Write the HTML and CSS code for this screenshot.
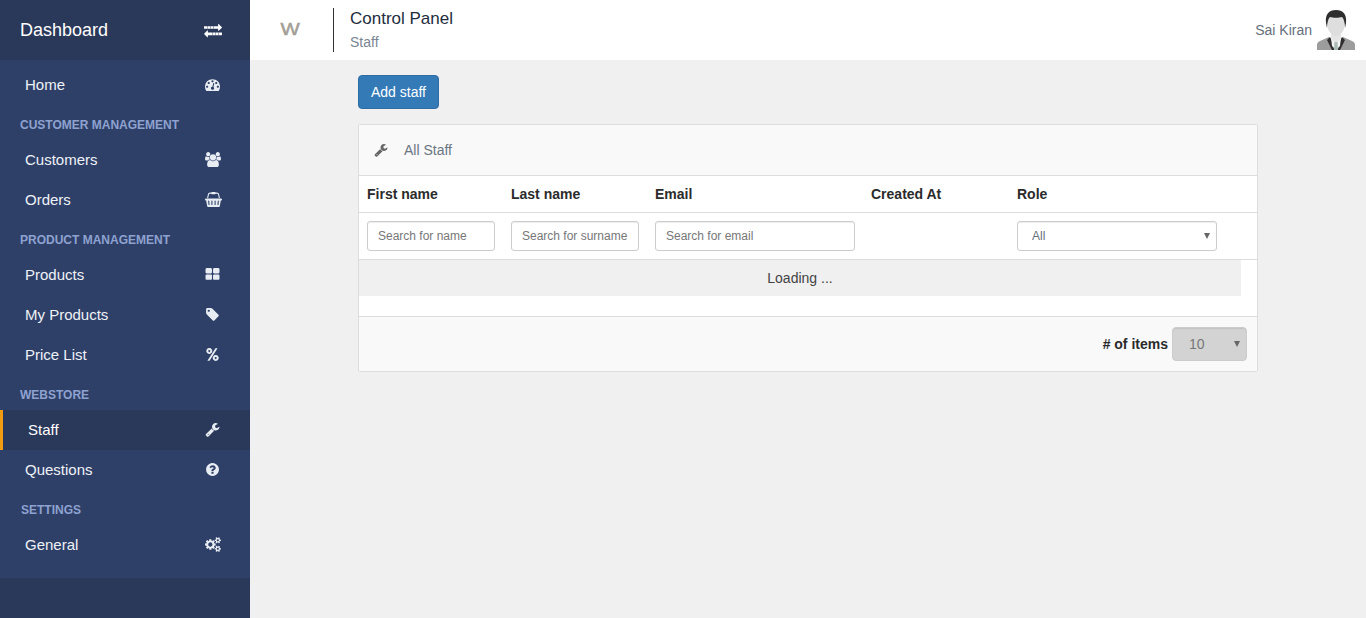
FILE: index.html
```html
<!DOCTYPE html>
<html lang="en">
<head>
    <meta charset="UTF-8">
    <meta name="viewport" content="width=device-width, initial-scale=1.0">
    <title>Control Panel - Staff</title>
    <link rel="stylesheet" href="styles.css">
</head>
<body>
    <div class="sidebar">
        <div class="brand">
            <span>Dashboard</span>
            <svg class="brand-icon" viewBox="0 0 1792 1792">
                <path d="M1792 1184v192q0 13-9.5 22.5t-22.5 9.5h-1376v192q0 13-9.5 22.5t-22.5 9.5q-12 0-24-10l-319-320q-9-9-9-22 0-14 9-23l320-320q9-9 23-9 13 0 22.5 9.5t9.5 22.5v192h1376q13 0 22.5 9.5t9.5 22.5zm0-544q0 14-9 23l-320 320q-9 9-23 9-13 0-22.5-9.5t-9.5-22.5v-192h-1376q-13 0-22.5-9.5t-9.5-22.5v-192q0-13 9.5-22.5t22.5-9.5h1376v-192q0-14 9-23t23-9q12 0 24 10l319 319q9 9 9 23z"/>
                <path class="brand-cut" d="M300 380h70v400h-70zM620 380h70v400h-70zM900 380h70v400h-70zM830 1040h70v400h-70zM1120 1040h70v400h-70zM1420 1040h70v400h-70z"/>
            </svg>
        </div>
        <nav class="menu">
            <a class="item">Home
                <svg class="icon" viewBox="0 0 1792 1792"><path d="M384 1152q0-53-37.5-90.5t-90.5-37.5-90.5 37.5-37.5 90.5 37.5 90.5 90.5 37.5 90.5-37.5 37.5-90.5zm192-448q0-53-37.5-90.5t-90.5-37.5-90.5 37.5-37.5 90.5 37.5 90.5 90.5 37.5 90.5-37.5 37.5-90.5zm428 481l101-382q6-26-7.5-48.5t-38.5-29.5-48 6.5-30 39.5l-101 382q-60 5-107 43.5t-63 98.5q-20 77 20 146t117 89 146-20 89-117q16-60-6-117t-72-91zm660-33q0-53-37.5-90.5t-90.5-37.5-90.5 37.5-37.5 90.5 37.5 90.5 90.5 37.5 90.5-37.5 37.5-90.5zm-640-640q0-53-37.5-90.5t-90.5-37.5-90.5 37.5-37.5 90.5 37.5 90.5 90.5 37.5 90.5-37.5 37.5-90.5zm448 192q0-53-37.5-90.5t-90.5-37.5-90.5 37.5-37.5 90.5 37.5 90.5 90.5 37.5 90.5-37.5 37.5-90.5zm320 448q0 261-141 483-19 29-54 29h-1402q-35 0-54-29-141-221-141-483 0-182 71-348t191-286 286-191 348-71 348 71 286 191 191 286 71 348z"/></svg>
            </a>
            <div class="section">CUSTOMER MANAGEMENT</div>
            <a class="item">Customers
                <svg class="icon icon-wide" viewBox="0 0 1920 1792"><path d="M593 896q-162 5-265 128h-134q-82 0-138-40.5t-56-118.5q0-353 124-353 6 0 43.5 21t97.5 42.5 119 21.5q67 0 133-23-5 37-5 66 0 139 81 256zm1071 637q0 120-73 189.5t-194 69.5h-874q-121 0-194-69.5t-73-189.5q0-53 3.5-103.5t14-109 26.5-108.5 43-97.5 62-81 85.5-53.5 111.5-20q10 0 43 21.5t73 48 107 48 135 21.5 135-21.5 107-48 73-48 43-21.5q61 0 111.5 20t85.5 53.5 62 81 43 97.5 26.5 108.5 14 109 3.5 103.5zm-1024-1277q0 106-75 181t-181 75-181-75-75-181 75-181 181-75 181 75 75 181zm704 384q0 159-112.5 271.5t-271.5 112.5-271.5-112.5-112.5-271.5 112.5-271.5 271.5-112.5 271.5 112.5 112.5 271.5zm576 225q0 78-56 118.5t-138 40.5h-134q-103-123-265-128 81-117 81-256 0-29-5-66 66 23 133 23 59 0 119-21.5t97.5-42.5 43.5-21q124 0 124 353zm-128-609q0 106-75 181t-181 75-181-75-75-181 75-181 181-75 181 75 75 181z"/></svg>
            </a>
            <a class="item">Orders
                <svg class="icon icon-wider" viewBox="0 0 2048 1792"><path d="M1920 768q53 0 90.5 37.5t37.5 90.5-37.5 90.5-90.5 37.5h-15l-115 662q-8 46-44 76t-82 30h-1280q-46 0-82-30t-44-76l-115-662h-15q-53 0-90.5-37.5t-37.5-90.5 37.5-90.5 90.5-37.5h1792zm-1435 800q26-2 43.5-22.5t15.5-46.5l-32-416q-2-26-22.5-43.5t-46.5-15.5-43.5 22.5-15.5 46.5l32 416q2 25 20.5 42t43.5 17h5zm411-64v-416q0-26-19-45t-45-19-45 19-19 45v416q0 26 19 45t45 19 45-19 19-45zm384 0v-416q0-26-19-45t-45-19-45 19-19 45v416q0 26 19 45t45 19 45-19 19-45zm352 5l32-416q2-26-15.5-46.5t-43.5-22.5-46.5 15.5-22.5 43.5l-32 416q-2 26 15.5 46.5t43.5 22.5h5q25 0 43.5-17t20.5-42zm-1156-1217l-93 412h-132l101-441q19-88 89-143.5t160-55.5h167q0-26 19-45t45-19h384q26 0 45 19t19 45h167q90 0 160 55.5t89 143.5l101 441h-132l-93-412q-11-44-45.5-72t-79.5-28h-167q0 26-19 45t-45 19h-384q-26 0-45-19t-19-45h-167q-45 0-79.5 28t-45.5 72z"/></svg>
            </a>
            <div class="section">PRODUCT MANAGEMENT</div>
            <a class="item">Products
                <svg class="icon" viewBox="0 0 1792 1792"><path d="M832 1024v384q0 52-38 90t-90 38h-512q-52 0-90-38t-38-90v-384q0-52 38-90t90-38h512q52 0 90 38t38 90zm0-768v384q0 52-38 90t-90 38h-512q-52 0-90-38t-38-90v-384q0-52 38-90t90-38h512q52 0 90 38t38 90zm896 768v384q0 52-38 90t-90 38h-512q-52 0-90-38t-38-90v-384q0-52 38-90t90-38h512q52 0 90 38t38 90zm0-768v384q0 52-38 90t-90 38h-512q-52 0-90-38t-38-90v-384q0-52 38-90t90-38h512q52 0 90 38t38 90z"/></svg>
            </a>
            <a class="item">My Products
                <svg class="icon" viewBox="0 0 1792 1792"><path d="M576 448q0-53-37.5-90.5t-90.5-37.5-90.5 37.5-37.5 90.5 37.5 90.5 90.5 37.5 90.5-37.5 37.5-90.5zm1067 576q0 53-37 90l-491 492q-39 37-91 37-53 0-90-37l-715-716q-38-37-64.5-101t-26.5-117v-416q0-52 38-90t90-38h416q53 0 117 26.5t102 64.5l715 714q37 39 37 91z"/></svg>
            </a>
            <a class="item">Price List
                <svg class="icon" viewBox="0 0 1536 1792"><path fill-rule="evenodd" d="M384 128a352 352 0 1 0 .1 0zm0 240a112 112 0 1 1-.1 0zM1152 960a352 352 0 1 0 .1 0zm0 240a112 112 0 1 1-.1 0zM1120 160h256L416 1632H160z"/></svg>
            </a>
            <div class="section">WEBSTORE</div>
            <a class="item active">Staff
                <svg class="icon" viewBox="0 0 1792 1792"><path d="M448 1472q0-26-19-45t-45-19-45 19-19 45 19 45 45 19 45-19 19-45zm644-420l-682 682q-37 37-90 37-52 0-91-37l-106-108q-38-36-38-90 0-53 38-91l681-681q39 98 114.5 173.5t173.5 114.5zm634-435q0 39-23 106-47 134-164.5 217.5t-258.5 83.5q-185 0-316.5-131.5t-131.5-316.5 131.5-316.5 316.5-131.5q58 0 121.5 16.5t107.5 46.5q16 11 16 28t-16 28l-293 169v224l193 107q5-3 79-48.5t135.5-81 70.5-35.5q15 0 23.5 10t8.5 25z"/></svg>
            </a>
            <a class="item">Questions
                <svg class="icon" viewBox="0 0 1792 1792"><path d="M1024 1376v-192q0-14-9-23t-23-9h-192q-14 0-23 9t-9 23v192q0 14 9 23t23 9h192q14 0 23-9t9-23zm256-672q0-88-55.5-163t-138.5-116-170-41q-243 0-371 213-15 24 8 42l132 100q7 6 19 6 16 0 25-12 53-68 86-92 34-24 86-24 48 0 85.5 26t37.5 59q0 38-20 61t-68 45q-63 28-115.5 86.5t-52.5 125.5v36q0 14 9 23t23 9h192q14 0 23-9t9-23q0-19 21.5-49.5t54.5-49.5q32-18 49-28.5t46-35 44.5-48 28-60.5 12.5-81zm384 192q0 209-103 385.5t-279.5 279.5-385.5 103-385.5-103-279.5-279.5-103-385.5 103-385.5 279.5-279.5 385.5-103 385.5 103 279.5 279.5 103 385.5z"/></svg>
            </a>
            <div class="section section-settings">SETTINGS</div>
            <a class="item">General
                <svg class="icon icon-wide" viewBox="0 0 1920 1792"><path d="M896 896q0-106-75-181t-181-75-181 75-75 181 75 181 181 75 181-75 75-181zm768 512q0-52-38-90t-90-38-90 38-38 90q0 53 37.5 90.5t90.5 37.5 90.5-37.5 37.5-90.5zm0-1024q0-52-38-90t-90-38-90 38-38 90q0 53 37.5 90.5t90.5 37.5 90.5-37.5 37.5-90.5zm-384 421v185q0 10-7 19.5t-16 10.5l-155 24q-11 35-32 76 34 48 90 115 7 11 7 20 0 12-7 19-23 30-82.5 89.5t-78.5 59.5q-11 0-21-7l-115-90q-37 19-77 31-11 108-23 155-7 24-30 24h-186q-11 0-20-7.5t-10-17.5l-23-153q-34-10-75-31l-118 89q-7 7-20 7-11 0-21-8-144-133-144-160 0-9 7-19 10-14 41-53t47-61q-23-44-35-82l-152-24q-10-1-17-9.5t-7-19.5v-185q0-10 7-19.5t16-10.5l155-24q11-35 32-76-34-48-90-115-7-11-7-20 0-12 7-20 22-30 82-89t79-59q11 0 21 7l115 90q34-18 77-32 11-108 23-154 7-24 30-24h186q11 0 20 7.5t10 17.5l23 153q34 10 75 31l118-89q8-7 20-7 11 0 21 8 144 133 144 160 0 8-7 19-12 16-42 54t-45 60q23 48 34 82l152 23q10 2 17 10.5t7 19.5zm640 533v140q0 16-149 31-12 27-30 52 51 113 51 138 0 4-4 7-122 71-124 71-8 0-46-47t-52-68q-20 2-30 2t-30-2q-14 21-52 68t-46 47q-2 0-124-71-4-3-4-7 0-25 51-138-18-25-30-52-149-15-149-31v-140q0-16 149-31 13-29 30-52-51-113-51-138 0-4 4-7 4-2 35-20t59-34 30-16q8 0 46 46.5t52 67.5q20-2 30-2t30 2q51-71 92-112l6-2q4 0 124 70 4 3 4 7 0 25-51 138 17 23 30 52 149 15 149 31zm0-1024v140q0 16-149 31-12 27-30 52 51 113 51 138 0 4-4 7-122 71-124 71-8 0-46-47t-52-68q-20 2-30 2t-30-2q-14 21-52 68t-46 47q-2 0-124-71-4-3-4-7 0-25 51-138-18-25-30-52-149-15-149-31v-140q0-16 149-31 13-29 30-52-51-113-51-138 0-4 4-7 4-2 35-20t59-34 30-16q8 0 46 46.5t52 67.5q20-2 30-2t30 2q51-71 92-112l6-2q4 0 124 70 4 3 4 7 0 25-51 138 17 23 30 52 149 15 149 31z"/></svg>
            </a>
            <a class="item">
                <svg class="icon" viewBox="0 0 1792 1792"><path d="M1536 1399q0 109-62.5 187t-150.5 78h-854q-88 0-150.5-78t-62.5-187q0-85 8.5-160.5t31.5-151.5 58.5-130 94-88.5 134.5-34.5q131 128 313 128t313-128q76 0 134.5 34.5t94 88.5 58.5 130 31.5 151.5 8.5 160.5zm-256-887q0 159-112.5 271.5t-271.5 112.5-271.5-112.5-112.5-271.5 112.5-271.5 271.5-112.5 271.5 112.5 112.5 271.5z"/></svg>
            </a>
        </nav>
        <div class="sidebar-foot"></div>
    </div>

    <div class="page">
        <header class="topbar">
            <div class="logo"><span>W</span></div>
            <div class="titles">
                <div class="title">Control Panel</div>
                <div class="subtitle">Staff</div>
            </div>
            <div class="user">
                <span>Sai Kiran</span>
                <svg class="avatar" viewBox="0 0 40 42">
                    <path fill="#e4e4e4" d="M15 24h10v7l-5 6-5-6z"/>
                    <path fill="#9c9c9c" d="M1 41v-5q0-3 3-4l9-4 7 9 7-9 9 4q3 1 3 4v5z"/>
                    <path fill="#dedede" d="M20 4c6 0 9 4 9 10 0 8-5 13-9 13s-9-5-9-13c0-6 3-10 9-10z"/>
                    <path fill="#2e2e2e" d="M20 1c7 0 11 4 10 13l-1 5c0-5-1-9-3-11-3 1-9 1-12 0-2 2-3 6-3 11l-1-5C9 5 13 1 20 1z"/>
                    <path fill="#2e2e2e" d="M14 28l-3 3 5 10h2l-1-7zM26 28l3 3-5 10h-2l1-7z"/>
                    <path fill="#f2f2f2" d="M15 29l5 6 5-6-1 8-4 4-4-4z"/>
                    <path fill="#a9bcb6" d="M18.500 33h3l.5 8h-4z"/>
                </svg>
            </div>
        </header>

        <main class="content">
            <button class="btn-add">Add staff</button>
            <section class="panel">
                <div class="panel-head">
                    <svg class="panel-icon" viewBox="0 0 1792 1792"><path d="M448 1472q0-26-19-45t-45-19-45 19-19 45 19 45 45 19 45-19 19-45zm644-420l-682 682q-37 37-90 37-52 0-91-37l-106-108q-38-36-38-90 0-53 38-91l681-681q39 98 114.5 173.5t173.5 114.5zm634-435q0 39-23 106-47 134-164.5 217.5t-258.5 83.5q-185 0-316.5-131.5t-131.5-316.5 131.5-316.5 316.5-131.5q58 0 121.5 16.5t107.5 46.5q16 11 16 28t-16 28l-293 169v224l193 107q5-3 79-48.5t135.5-81 70.5-35.5q15 0 23.5 10t8.5 25z"/></svg>
                    <span>All Staff</span>
                </div>
                <div class="row row-head">
                    <div>First name</div>
                    <div>Last name</div>
                    <div>Email</div>
                    <div>Created At</div>
                    <div>Role</div>
                </div>
                <div class="row row-filter">
                    <input class="w-name" type="text" placeholder="Search for name">
                    <input class="w-name" type="text" placeholder="Search for surname">
                    <input class="w-email" type="text" placeholder="Search for email">
                    <div></div>
                    <div class="select-wrap">
                        <select class="role-select"><option>All</option></select>
                    </div>
                </div>
                <div class="table-body">
                    <div class="loading">Loading ...</div>
                </div>
                <div class="panel-foot">
                    <label class="items-label"># of items</label>
                    <div class="select-wrap">
                        <select class="items-select" disabled><option>10</option></select>
                    </div>
                </div>
            </section>
        </main>
    </div>
</body>
</html>
```

FILE: styles.css
```css
* {
    box-sizing: border-box;
}
body {
    margin: 0;
    height: 618px;
    display: flex;
    overflow: hidden;
    font-family: "Liberation Sans", Arial, sans-serif;
    font-size: 14px;
    color: #333;
    background-color: #f0f0f0;
}

/* sidebar */
.sidebar {
    width: 250px;
    height: 618px;
    display: flex;
    flex-direction: column;
    flex-shrink: 0;
    background-color: #2f4068;
}
.brand {
    height: 60px;
    flex-shrink: 0;
    display: flex;
    align-items: center;
    justify-content: space-between;
    padding: 0 28px 0 20px;
    font-size: 18px;
    color: #fff;
    background-color: #2a3859;
}
.brand-icon {
    width: 18px;
    height: 18px;
    fill: #fff;
}
.brand-cut {
    fill: #2a3859;
    opacity: 0.55;
}
.menu {
    flex: 1;
    overflow: hidden;
    padding-top: 5px;
}
.item {
    height: 40px;
    display: flex;
    align-items: center;
    justify-content: space-between;
    padding: 0 0 2px 25px;
    font-size: 15px;
    color: #eef2f7;
}
.item.active {
    border-left: 3px solid #f39c12;
    background-color: #2a3859;
    color: #fff;
}
.icon {
    width: 15px;
    height: 15px;
    margin-right: 30px;
    fill: #e8edf3;
}
.icon-wide {
    width: 16px;
    margin-right: 29px;
}
.icon-wider {
    width: 17px;
    margin-right: 28px;
}
.section {
    height: 35px;
    padding: 13px 0 0 20px;
    font-size: 12px;
    line-height: 14px;
    font-weight: bold;
    color: #8ea2d0;
}
.section-settings {
    padding-left: 21px;
}
.sidebar-foot {
    height: 40px;
    flex-shrink: 0;
    background-color: #2a3859;
}

/* top bar */
.page {
    flex: 1;
    min-width: 0;
}
.topbar {
    height: 60px;
    display: flex;
    align-items: center;
    background-color: #fff;
}
.logo {
    width: 83px;
    padding-left: 32px;
    font-size: 17px;
    color: #a39f96;
}
.logo span {
    display: inline-block;
    transform: scaleX(1.2);
    -webkit-text-stroke: 0.5px #a39f96;
}
.titles {
    height: 44px;
    border-left: 1px solid #333;
    padding-left: 16px;
}
.title {
    font-size: 17px;
    line-height: 22px;
    color: #222d3d;
}
.subtitle {
    margin-top: 3px;
    font-size: 14px;
    line-height: 18px;
    color: #7a8594;
}
.user {
    margin-left: auto;
    display: flex;
    align-items: center;
    gap: 4px;
    padding-right: 10px;
    color: #666f7b;
}
.avatar {
    width: 40px;
    height: 42px;
}

/* content */
.content {
    width: 900px;
    margin-left: 108px;
    padding-top: 15px;
}
.btn-add {
    display: block;
    height: 34px;
    width: 81px;
    padding: 0;
    border: 1px solid #2e6da4;
    border-radius: 4px;
    background-color: #337ab7;
    color: #fff;
    font-family: inherit;
    font-size: 14px;
}
.panel {
    margin-top: 15px;
    height: 248px;
    border: 1px solid #ddd;
    border-radius: 2px;
    background-color: #fff;
}
.panel-head {
    height: 51px;
    display: flex;
    align-items: center;
    padding-left: 15px;
    border-bottom: 1px solid #ddd;
    background-color: #f9f9f9;
    color: #6b7683;
}
.panel-icon {
    width: 14px;
    height: 14px;
    margin-right: 16px;
    fill: #666;
}
.row {
    display: grid;
    grid-template-columns: 144px 144px 216px 146px 200px;
    padding: 0 8px;
    align-items: center;
    border-bottom: 1px solid #ddd;
}
.row-head {
    height: 37px;
    font-weight: bold;
    color: #2b2b2b;
}
.row-filter {
    height: 47px;
}
.w-name {
    width: 128px;
}
.w-email {
    width: 200px;
}
input, select {
    height: 30px;
    padding: 0 10px;
    border: 1px solid #ccc;
    border-radius: 3px;
    background-color: #fff;
    font-family: inherit;
    font-size: 12px;
    color: #66707d;
    appearance: none;
    box-shadow: inset 0 1px 1px rgba(0, 0, 0, 0.075);
}
input::placeholder {
    color: #777;
    opacity: 1;
}
.select-wrap {
    position: relative;
}
.select-wrap::after {
    content: "";
    position: absolute;
    right: 7px;
    top: 50%;
    margin-top: -3px;
    border-left: 3px solid transparent;
    border-right: 3px solid transparent;
    border-top: 6px solid #666;
}
.role-select {
    display: block;
    width: 200px;
    padding-left: 14px;
}
.table-body {
    height: 56px;
}
.loading {
    width: 882px;
    height: 36px;
    line-height: 37px;
    text-align: center;
    background-color: #f0f0f0;
    color: #444;
}
.panel-foot {
    height: 55px;
    display: flex;
    align-items: center;
    justify-content: flex-end;
    gap: 4px;
    padding-right: 10px;
    border-top: 1px solid #ddd;
    background-color: #f9f9f9;
}
.items-label {
    font-weight: bold;
    color: #2b2b2b;
}
.items-select {
    display: block;
    width: 75px;
    height: 34px;
    padding-left: 16px;
    font-size: 14px;
    color: #777;
    background-color: #d3d3d3;
    opacity: 1;
    border-radius: 4px;
}
```
